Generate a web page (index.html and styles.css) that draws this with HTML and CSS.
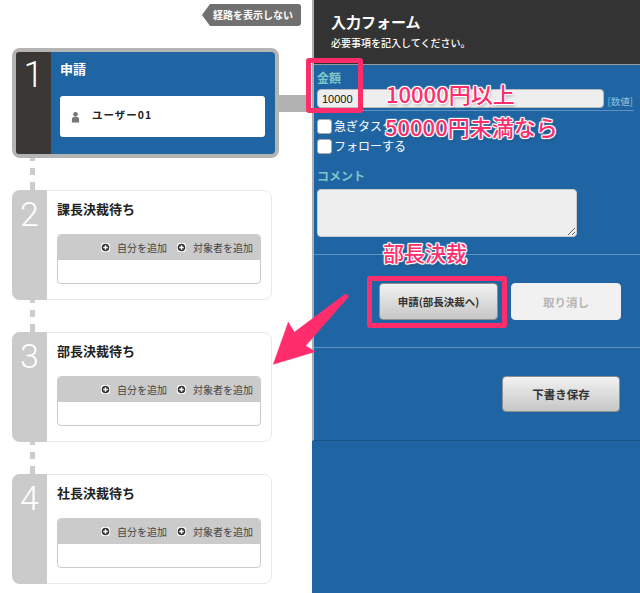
FILE: index.html
```html
<!DOCTYPE html>
<html lang="ja">
<head>
<meta charset="utf-8">
<title>入力フォーム</title>
<link rel="stylesheet" href="styles.css">
</head>
<body>
<div class="page">
  <div class="route">
    <div class="route-top"><a class="tag">経路を表示しない</a></div>
    <section class="step step-active">
      <div class="num">1</div>
      <div class="step-body">
        <h2 class="step-title">申請</h2>
        <div class="user">
          <svg class="user-icon" viewBox="0 0 10 12"><circle cx="5" cy="3" r="2.6"/><path d="M1 12V8.2C1 6.8 2 6 3.2 6h3.6C8 6 9 6.800 9 8.200V12z"/></svg>
          <span>ユーザー01</span>
        </div>
      </div>
      <div class="link"></div>
    </section>
    <div class="dash"></div>
    <section class="step">
      <div class="num">2</div>
      <div class="step-body">
        <h2 class="step-title">課長決裁待ち</h2>
        <div class="slot">
          <div class="slot-bar">
            <span class="add"><svg class="plus" viewBox="0 0 10 10"><circle cx="5" cy="5" r="5"/><path d="M5 2.500v5M2.500 5h5"/></svg>自分を追加</span>
            <span class="add"><svg class="plus" viewBox="0 0 10 10"><circle cx="5" cy="5" r="5"/><path d="M5 2.500v5M2.500 5h5"/></svg>対象者を追加</span>
          </div>
        </div>
      </div>
    </section>
    <div class="dash"></div>
    <section class="step">
      <div class="num">3</div>
      <div class="step-body">
        <h2 class="step-title">部長決裁待ち</h2>
        <div class="slot">
          <div class="slot-bar">
            <span class="add"><svg class="plus" viewBox="0 0 10 10"><circle cx="5" cy="5" r="5"/><path d="M5 2.500v5M2.500 5h5"/></svg>自分を追加</span>
            <span class="add"><svg class="plus" viewBox="0 0 10 10"><circle cx="5" cy="5" r="5"/><path d="M5 2.500v5M2.500 5h5"/></svg>対象者を追加</span>
          </div>
        </div>
      </div>
    </section>
    <div class="dash"></div>
    <section class="step">
      <div class="num">4</div>
      <div class="step-body">
        <h2 class="step-title">社長決裁待ち</h2>
        <div class="slot">
          <div class="slot-bar">
            <span class="add"><svg class="plus" viewBox="0 0 10 10"><circle cx="5" cy="5" r="5"/><path d="M5 2.500v5M2.500 5h5"/></svg>自分を追加</span>
            <span class="add"><svg class="plus" viewBox="0 0 10 10"><circle cx="5" cy="5" r="5"/><path d="M5 2.500v5M2.500 5h5"/></svg>対象者を追加</span>
          </div>
        </div>
      </div>
    </section>
  </div>

  <div class="panel">
    <div class="form">
      <header class="head">
        <h1 class="head-title">入力フォーム</h1>
        <p class="head-sub">必要事項を記入してください。</p>
      </header>
      <div class="fields">
        <label class="label">金額</label>
        <div class="amount">
          <input class="amount-input" type="text" value="10000">
          <span class="hint">[数値]</span>
        </div>
        <label class="check"><input class="box" type="checkbox">急ぎタスク</label>
        <label class="check"><input class="box" type="checkbox">フォローする</label>
        <label class="label label-comment">コメント</label>
        <textarea class="comment"></textarea>
      </div>
      <div class="actions">
        <button class="btn btn-main" type="button">申請(部長決裁へ)</button>
        <button class="btn btn-off" type="button">取り消し</button>
      </div>
      <div class="actions actions-save">
        <button class="btn btn-save" type="button">下書き保存</button>
      </div>
    </div>
    <div class="rest"></div>
  </div>

  <div class="note note-a">10000円以上</div>
  <div class="note note-b">50000円未満なら</div>
  <div class="note note-c">部長決裁</div>
  <div class="mark mark-a"></div>
  <div class="mark mark-b"></div>
  <svg class="arrow" viewBox="0 0 640 593"><polygon points="345,294.300 294.300,332.300 288.300,322.300 273.300,364.300 315,351.700 305.700,345.700 348.300,297 347.700,295"/></svg>
</div>
</body>
</html>
```

FILE: styles.css
```css
* { box-sizing: border-box; }
html, body { margin: 0; padding: 0; background: #fff; }
body { font-family: "Noto Sans CJK JP", "Liberation Sans", sans-serif; }

.page { position: relative; display: flex; width: 640px; height: 593px; overflow: hidden; }

/* left route column */
.route { width: 312px; flex: none; padding-left: 12px; }
.route-top { display: flex; justify-content: flex-end; height: 48px; padding: 4px 11px 0 0; }
.tag {
  display: block; height: 22px; width: 99px; padding-left: 11px;
  font-size: 10px; line-height: 22px; font-weight: 700; color: #fff; white-space: nowrap;
  background: #707070; border-radius: 0 3px 3px 0;
  clip-path: polygon(0 50%, 8px 0, 100% 0, 100% 100%, 8px 100%);
}

.step {
  position: relative; display: flex; width: 260px; height: 110px;
  background: #fff; border: 1px solid #e9e9e9; border-radius: 8px;
}
.num {
  flex: none; width: 35px; margin: -1px 0 -1px -1px;
  background: #cbcbcb; border-radius: 8px 0 0 8px; color: #fff;
  font-family: "Roboto", "Liberation Sans", sans-serif; font-weight: 300;
  font-size: 34px; line-height: 46px; text-align: center; padding-top: 1px;
}
.step-body { flex: 1; padding: 8px 10px 0; }
.step-title { margin: 0 0 15px; font-size: 13px; line-height: 20px; font-weight: 700; color: #222; }

.slot { height: 50px; background: #fff; border: 1px solid #ccc; border-radius: 4px; overflow: hidden; }
.slot-bar {
  display: flex; justify-content: flex-end; align-items: center; gap: 10px;
  height: 26px; margin: -1px -1px 0; padding-right: 8px; background: #cbcbcb;
}
.add { display: flex; align-items: center; font-size: 10px; color: #444; white-space: nowrap; }
.plus { width: 9px; height: 9px; margin-right: 7px; fill: #333; stroke: #fff; stroke-width: 1.600; }

.dash {
  width: 5px; height: 32px; margin-left: 18px;
  background: repeating-linear-gradient(to bottom, #ccc 0 3px, transparent 3px 10px, #ccc 10px 17px, transparent 17px 24px, #ccc 24px 32px);
}

.step-active {
  width: 267px; background: #1f65a3; border: 4px solid #b4b4b4; border-radius: 8px;
}
.step-active .num { width: 35px; margin: 0; background: #3b3735; border-radius: 3px 0 0 3px; font-size: 36px; line-height: 46px; padding-top: 0; }
.step-active .step-body { padding: 6px 10px 0 9px; }
.step-active .step-title { margin: 0 0 16px; color: #fff; font-size: 13px; line-height: 22px; }
.user {
  display: flex; align-items: center; width: 205px; height: 41px; padding: 0 0 4px 11px;
  background: #fff; border-radius: 3px;
  font-size: 10.500px; font-weight: 700; letter-spacing: 1px; color: #222;
}
.user-icon { width: 9px; height: 12px; margin: 4px 12px 0 0; fill: #777; }
.link { position: absolute; left: 263px; top: 43px; width: 28px; height: 17px; background: #b2b2b2; }

/* right panel */
.panel { flex: 1; display: flex; flex-direction: column; background: #1f65a3; }
.form { height: 441px; border-left: 2px solid #aeaeae; border-bottom: 1px solid #195488; }
.head { height: 65px; padding: 12px 0 0 17px; background: #333; border-bottom: 1px solid #999; }
.head-title { margin: 0; font-size: 15px; line-height: 20px; font-weight: 700; color: #fff; }
.head-sub { margin: 3px 0 0; font-size: 10px; line-height: 16px; font-weight: 500; color: #fff; }

.fields { height: 190px; padding: 4px 6px 0 3px; border-bottom: 1px solid #5d93c3; }
.label { display: block; font-size: 12px; line-height: 18px; font-weight: 700; color: #7fc6c8; }
.amount {
  display: flex; align-items: flex-end; justify-content: space-between;
  margin-top: 2px; height: 22px; padding-bottom: 2px; border-bottom: 1px solid #5d93c3;
}
.amount-input {
  width: 287px; height: 19px; padding: 0 4px; border: 1px solid #bbb; border-radius: 4px; outline: 0;
  background: #eee; color: #111; font-family: "Liberation Sans", sans-serif; font-size: 11px;
}
.hint { font-size: 9.500px; line-height: 14px; color: #8ec5df; padding-right: 1px; white-space: nowrap; }
.check { display: flex; align-items: center; height: 20px; font-size: 12px; color: #fff; line-height: 20px; white-space: nowrap; }
.check:first-of-type { margin-top: 0; }
.amount + .check { margin-top: 5px; }
.box {
  appearance: none; flex: none; width: 15px; height: 15px; margin: 0 2px 0 0;
  background: #fff; border: 1.500px solid #aaa; border-radius: 3px;
}
.label-comment { margin-top: 11px; }
.comment {
  display: block; width: 260px; height: 48px; margin-top: 4px; padding: 3px;
  background: #eee; border: 1px solid #ccc; border-radius: 4px; outline: 0;
}

.actions { display: flex; justify-content: flex-end; gap: 13px; height: 93px; padding: 28px 19px 0 0; border-bottom: 1px solid #5d93c3; }
.actions-save { height: 91px; padding-right: 20px; border-bottom: 0; }
.btn {
  height: 37px; padding: 0; border: 1px solid #8f8f8f; border-radius: 4px;
  font-family: inherit; font-size: 10.500px; font-weight: 700; color: #333;
  background: linear-gradient(#f2f2f2, #c6c6c6);
}
.btn-main { width: 119px; }
.btn-off { width: 110px; border-color: #eee; color: #b5b5b5; background: #f1f1f1; font-size: 11.500px; }
.btn-save { width: 118px; height: 36px; font-size: 11.500px; }
.rest { flex: 1; }

/* annotations over the screenshot */
.note {
  position: absolute; font-weight: 500; color: #ff2d6b; white-space: nowrap;
  font-size: 22px; line-height: 30px;
  text-shadow: 1px 0 0 #fff, -1px 0 0 #fff, 0 1px 0 #fff, 0 -1px 0 #fff, 1px 1px 1px #fff, -1px 1px 1px #fff, 1px -1px 1px #fff, -1px -1px 1px #fff, 1px 2px 3px rgba(0,0,0,.35);
}
.note-a { left: 386px; top: 78px; }
.note-b { left: 385px; top: 111px; }
.note-c { left: 383px; top: 237px; font-size: 21px; }
.mark { position: absolute; border: 5px solid #ff2d6b; border-radius: 3px; }
.mark-a { left: 306px; top: 58px; width: 57px; height: 55px; }
.mark-b { left: 367px; top: 276px; width: 140px; height: 52px; }
.arrow { position: absolute; left: 0; top: 0; width: 640px; height: 593px; fill: #ff2d6b; stroke: #ff2d6b; stroke-width: .5; pointer-events: none; }
```
